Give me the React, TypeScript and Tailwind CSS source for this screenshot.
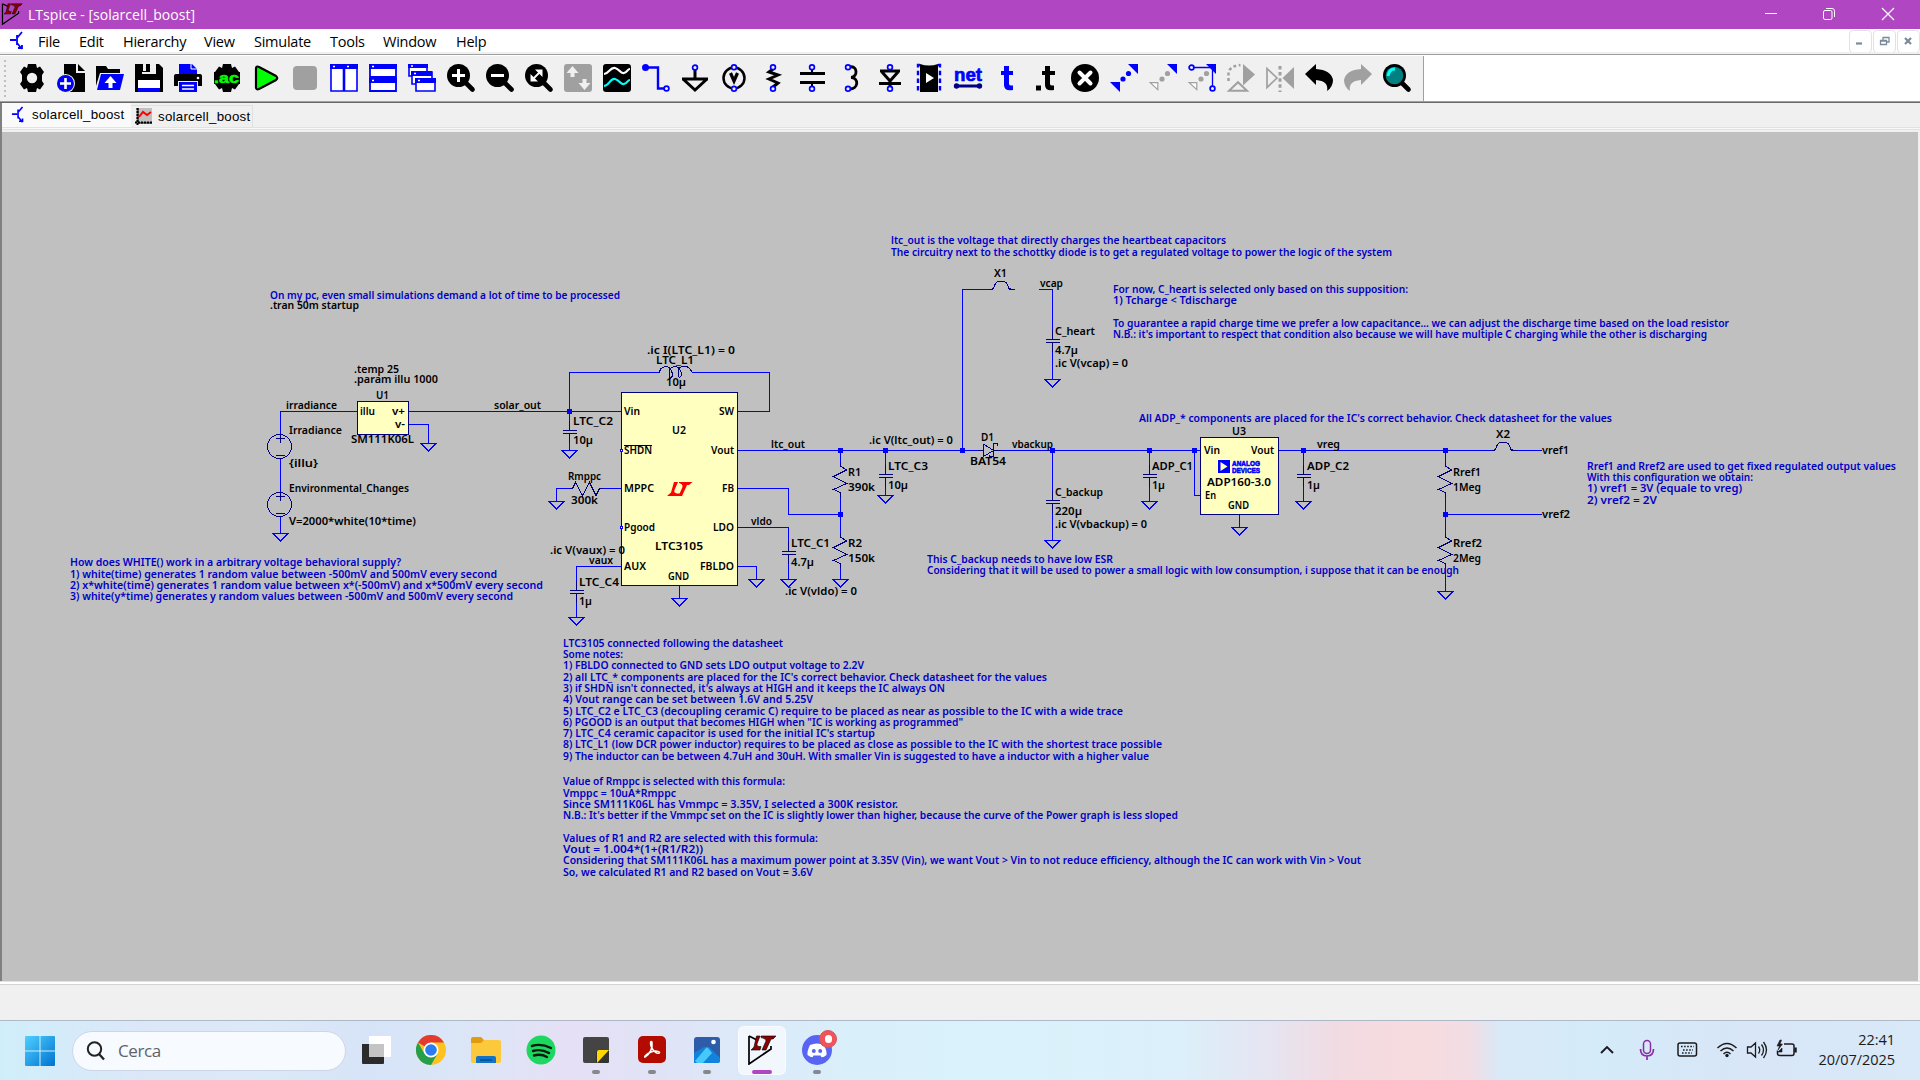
import React from "react";

type Kids = { children?: React.ReactNode };
const BLUE = "#0000ff";
const NAVY = "#000080";
const GREY = "#a0a0a0";

/* ---------- Toolbar icons, 28 x 28 ---------- */

const Mag = ({ children }: Kids) => (
  <>
    <path d="M18 18l7.5 7.5" stroke="#000" strokeWidth="4.6" strokeLinecap="round" />
    <circle cx="11.500" cy="11.500" r="11.500" fill="#000" />
    {children}
  </>
);
const Pin = ({ x, y }: { x: number; y: number }) => (
  <circle cx={x} cy={y} r="2.4" fill="#f0f0f0" stroke={BLUE} strokeWidth="1.7" />
);

const toolbarIcons: React.ReactNode[] = [
  <>
    <path d="M10 0h8l1 4 3-1.500 4 5.500-2 3v6l2 3-4 5.500-3-1.500-1 4h-8l-1-4-3 1.500-4-5.500 2-3v-6l-2-3 4-5.500 3 1.500z" fill="#000" />
    <circle cx="14" cy="14" r="5.200" fill="#f0f0f0" />
  </>,
  <>
    <path d="M7 0h12v9h9v19H7z" fill="#000" />
    <path d="M21 0l7 7h-7z" fill="#000" />
    <circle cx="8.500" cy="19.500" r="9.500" fill="#f0f0f0" />
    <circle cx="8.500" cy="19.500" r="8.500" fill={BLUE} />
    <path d="M8.500 14v11M3 19.500h11" stroke="#fff" strokeWidth="2.600" />
  </>,
  <>
    <path d="M0 2h10l2 3h12v4H4L0 22z" fill="#000" />
    <path d="M5 10h23l-4 16H1z" fill={BLUE} />
    <path d="M14.500 12l6 7h-4v5h-4v-5h-4z" fill="#fff" />
  </>,
  <>
    <path d="M0 0h24l4 4v24H0z" fill="#000" />
    <path d="M7 0h14v10H7z" fill="#f0f0f0" />
    <path d="M7 0h8v8H7z" fill="#000" />
    <path d="M8 0h3v7H8z" fill="#f0f0f0" />
    <path d="M3 16h22v8H3z" fill="#fff" />
    <path d="M3 24h22v4H3z" fill={BLUE} />
  </>,
  <>
    <path d="M5 0h13l5 5v5H5z" fill={BLUE} />
    <path d="M17 0v5h6" stroke="#fff" fill="none" />
    <path d="M0 12q0-2 2-2h24q2 0 2 2v10H0z" fill="#000" />
    <circle cx="24" cy="14" r="1.300" fill="#fff" />
    <path d="M4 17h20v11H4z" fill="#f0f0f0" />
    <path d="M5 18h18v10H5z" fill={BLUE} />
    <path d="M8 21.500h12M8 25h12" stroke="#fff" strokeWidth="1.500" />
  </>,
  <>
    <path d="M10 0h8l1 4 3-1.500 4 5.500-2 3v6l2 3-4 5.500-3-1.500-1 4h-8l-1-4-3 1.500-4-5.500 2-3v-6l-2-3 4-5.500 3 1.500z" fill="#000" />
    <path d="M1 8h26v12H1z" fill="#000" />
    <text x="1" y="18.500" fontSize="15" fontWeight="700" fill="#00ff00" stroke="#00ff00" strokeWidth=".5" textLength="25" lengthAdjust="spacingAndGlyphs" fontFamily="Liberation Sans, sans-serif">.ac</text>
  </>,
  <path d="M4 4.500q0-3 3-1.500l17 9q2.500 2 0 4l-17 9q-3 1-3-1.500z" fill="#00ff00" stroke="#000" strokeWidth="2.200" />,
  <rect x="2" y="2" width="24" height="24" rx="4" fill={GREY} />,
  <>
    <path d="M1 1h12.500v26H1zM14.500 1H27v26H14.500z" fill="#fff" stroke={BLUE} strokeWidth="1.600" />
    <path d="M0 0h28v5H0z" fill={BLUE} />
    <path d="M3 2.500h2M17 2.500h2" stroke="#fff" strokeWidth="1.500" />
  </>,
  <>
    <path d="M1 1h26v12H1zM1 15h26v12H1z" fill="#fff" stroke={BLUE} strokeWidth="1.800" />
    <path d="M0 0h28v5H0zM0 14h28v5H0z" fill={BLUE} />
    <path d="M3 2.500h2M3 16.500h2" stroke="#fff" strokeWidth="1.500" />
  </>,
  <>
    <path d="M1 1h18v11H1z" fill="#fff" stroke={BLUE} strokeWidth="1.600" />
    <path d="M0 0h20v4H0z" fill={BLUE} />
    <path d="M4 8h20v12H4z" fill="#fff" stroke={BLUE} strokeWidth="1.600" />
    <path d="M3 7h21v5H3z" fill={BLUE} />
    <path d="M8 16h19v11H8z" fill="#fff" stroke={BLUE} strokeWidth="1.600" />
    <path d="M7 14h21v5H7z" fill={BLUE} />
    <path d="M3 2h2M6 9.500h2M10 16.500h2" stroke="#fff" strokeWidth="1.500" />
  </>,
  <Mag><path d="M11.500 5v13M5 11.500h13" stroke="#fff" strokeWidth="3" /></Mag>,
  <Mag><path d="M5 11.500h13" stroke="#fff" strokeWidth="3" /></Mag>,
  <Mag><path d="M10 5.500h7.500V13zM5.500 10v7.500H13z" fill="#fff" /><path d="M7 16l9-9" stroke="#fff" strokeWidth="1.800" /></Mag>,
  <>
    <rect width="28" height="28" rx="3" fill={GREY} />
    <path d="M8.500 2l6 7h-4v4h-4V9h-4zM20.500 26l6-7h-4v-4h-4v4h-4z" fill="#f0f0f0" />
  </>,
  <>
    <rect width="28" height="28" rx="3" fill="#000" />
    <path d="M1 10c5 0 6-7 11-6s5 6 9 5 3-4 6-4" stroke="#fff" strokeWidth="2.200" fill="none" />
    <path d="M1 22c5 0 6-8 11-7s5 6 9 5 3-4 6-4" stroke="#00ffff" strokeWidth="2.200" fill="none" />
  </>,
  <>
    <path d="M4 3.500h12v21h8" stroke={BLUE} strokeWidth="2.400" fill="none" />
    <circle cx="3.500" cy="3.500" r="3.500" fill={BLUE} />
    <Pin x={24.500} y={24.500} />
  </>,
  <>
    <path d="M14 5v9M1 15h26M2 15l12 11 12-11" stroke="#000" strokeWidth="3" fill="none" />
    <Pin x={14} y={3.500} />
  </>,
  <>
    <circle cx="14" cy="14" r="10.500" fill="none" stroke="#000" strokeWidth="2.500" />
    <path d="M10.500 9l3.500 8 3.500-8" stroke="#000" strokeWidth="3.200" fill="none" />
    <Pin x={14} y={3.200} /><Pin x={14} y={24.800} />
  </>,
  <>
    <path d="M14 5l-4 3 9 3-9 4 9 4-5 4" stroke="#000" strokeWidth="3" fill="none" />
    <Pin x={14} y={3.200} /><Pin x={14} y={24.800} />
  </>,
  <>
    <path d="M2 9.500h25M2 18.500h25" stroke="#000" strokeWidth="3.200" />
    <path d="M14 5v5M14 18v5" stroke="#000" strokeWidth="2" />
    <Pin x={14} y={3.200} /><Pin x={14} y={24.800} />
  </>,
  <>
    <path d="M12 3c9-2 9 10 2 10.500c8 0 8 12-2 11.500" stroke="#000" strokeWidth="2.800" fill="none" />
    <Pin x={11} y={3.200} /><Pin x={11} y={24.800} />
  </>,
  <>
    <path d="M4 7h20M6 8l8 9 8-9M3 19.500h22M14 17v7" stroke="#000" strokeWidth="3" fill="none" />
    <Pin x={14} y={3.200} /><Pin x={14} y={24.800} />
  </>,
  <>
    <path d="M5 0q9 3 18 0v28H5z" fill="#000" />
    <path d="M11 9l8 5-8 5z" fill="#fff" />
    <path d="M5 1H3v26h2M23 1h2v26h-2" stroke={BLUE} strokeWidth="2.400" strokeDasharray="4.500 3.200" fill="none" />
  </>,
  <>
    <text x="0" y="17" fontSize="18.500" fontWeight="700" fill={BLUE} stroke={BLUE} strokeWidth=".7" textLength="28" lengthAdjust="spacingAndGlyphs" fontFamily="Liberation Sans, sans-serif">net</text>
    <path d="M2 22h24" stroke={NAVY} strokeWidth="3" />
    <circle cx="2.500" cy="22" r="2.700" fill={NAVY} /><circle cx="25.500" cy="22" r="2.700" fill={NAVY} />
  </>,
  <path d="M11 2h5v5h4v4h-4v9q0 2 4 1.500v4.500q-9 1.500-9-5V11H8V7h3z" fill={BLUE} />,
  <path d="M13 2h5v5h5v4h-5v9q0 2 4 1.500v4.500q-9 1.500-9-5V11h-3V7h3zM4 21.500h5v5H4z" fill="#000" />,
  <>
    <circle cx="14" cy="14" r="14" fill="#000" />
    <path d="M8.500 8.500l11 11M19.500 8.500l-11 11" stroke="#fff" strokeWidth="4" strokeLinecap="round" />
  </>,
  <>
    <path d="M18 0h10v10zM0 18h10v10z" fill={BLUE} />
    <circle cx="18.500" cy="9.500" r="2.600" fill={BLUE} /><circle cx="13" cy="15" r="2.600" fill={BLUE} />
  </>,
  <>
    <path d="M18 0h10v10z" fill={BLUE} />
    <path d="M1.200 18.600h7.600v7z" fill="#fff" stroke={GREY} strokeWidth="1.200" />
    <circle cx="18.500" cy="9.500" r="2.600" fill={GREY} /><circle cx="13" cy="15" r="2.600" fill={GREY} />
  </>,
  <>
    <path d="M18 0h10v10z" fill={BLUE} />
    <path d="M3 3.500h21.500v21" stroke={BLUE} strokeWidth="1.300" fill="none" />
    <path d="M1.200 18.600h7.600v7z" fill="#fff" stroke={GREY} strokeWidth="1.200" />
    <circle cx="18.500" cy="9.500" r="2.600" fill={GREY} /><circle cx="13" cy="15" r="2.600" fill={GREY} />
    <Pin x={3.500} y={3.500} /><Pin x={24.500} y={24.500} />
  </>,
  <>
    <path d="M16 0l12 10.500-12 11z" fill={GREY} />
    <path d="M1.500 17V8q2-6 12-7" stroke={GREY} strokeWidth="2.500" strokeDasharray="3 2.500" fill="none" />
    <path d="M2 26.700l9-8.500 9 8.500z" fill="#f0f0f0" stroke={GREY} strokeWidth="2" />
  </>,
  <>
    <path d="M1 4.500L11 14 1 23.500z" fill="none" stroke={GREY} strokeWidth="1.700" />
    <path d="M28 3L16.500 14 28 25z" fill={GREY} />
    <path d="M14 2v26" stroke={GREY} strokeWidth="3" strokeDasharray="3.500 2.600" />
  </>,
  <path d="M0 10L11 0v5q15 1 17 11 0 7-6 11 2-10-11-11v5z" fill="#000" />,
  <path d="M28 10L17 0v5Q2 6 0 16q0 7 6 11-2-10 11-11v5z" fill={GREY} />,
  <Mag>
    <circle cx="11.500" cy="11.500" r="8.800" fill="#008080" />
    <path d="M5 12q1-7 7-7" stroke="#00ffff" strokeWidth="3" fill="none" />
  </Mag>,
];

const LTLogo = ({ s }: { s: number }) => (
  <svg width={s} height={s} viewBox="0 0 30 30" fill="none">
    <path d="M2 1v28L24 14V11M2 1l8 4" stroke="#000" strokeWidth="1.700" />
    <path d="M9.500 1h3.500l-3 8q-.5 2 2 2.500h2l-1 3.500H4l3-3zM14 1h15l-3 3h-2l-5 11h-4l4-9q.5-2.500-5-3.500z" fill="#8b0000" stroke="#000" strokeWidth=".6" />
  </svg>
);

const Transistor = () => (
  <svg width="15" height="20" viewBox="0 0 15 20" fill="none" stroke={BLUE} strokeWidth="1.800">
    <path d="M0 9h6M7 4v10M7 7l5-6M7 12l5 6M8 17h4v-3" />
  </svg>
);

/* ---------- Schematic ---------- */

type Label = [number, number, number, string];

const blackLabels: Label[] = [
  [270, 309, 359, ".tran 50m startup"],
  [354, 373, 399, ".temp 25"],
  [354, 383, 438, ".param illu 1000"],
  [376, 399, 389, "U1"],
  [286, 409, 337, "irradiance"],
  [360, 415, 375, "illu"],
  [392, 415, 405, "v+"],
  [395, 428, 405, "v-"],
  [289, 434, 342, "Irradiance"],
  [351, 443, 414, "SM111K06L"],
  [289, 467, 318, "{illu}"],
  [289, 492, 409, "Environmental_Changes"],
  [289, 525, 416, "V=2000*white(10*time)"],
  [494, 409, 541, "solar_out"],
  [573, 425, 613, "LTC_C2"],
  [573, 444, 593, "10µ"],
  [568, 480, 601, "Rmppc"],
  [571, 504, 598, "300k"],
  [647, 354, 735, ".ic I(LTC_L1) = 0"],
  [656, 364, 694, "LTC_L1"],
  [666, 386, 686, "10µ"],
  [624, 415, 640, "Vin"],
  [719, 415, 734, "SW"],
  [672, 434, 686, "U2"],
  [624, 454, 652, "SHDN"],
  [711, 454, 734, "Vout"],
  [624, 492, 654, "MPPC"],
  [722, 492, 734, "FB"],
  [624, 531, 655, "Pgood"],
  [713, 531, 734, "LDO"],
  [655, 550, 703, "LTC3105"],
  [624, 570, 646, "AUX"],
  [700, 570, 734, "FBLDO"],
  [668, 580, 689, "GND"],
  [550, 554, 625, ".ic V(vaux) = 0"],
  [589, 564, 613, "vaux"],
  [579, 586, 619, "LTC_C4"],
  [579, 605, 592, "1µ"],
  [771, 448, 805, "ltc_out"],
  [848, 476, 861, "R1"],
  [848, 491, 875, "390k"],
  [848, 547, 862, "R2"],
  [848, 562, 875, "150k"],
  [751, 525, 772, "vldo"],
  [791, 547, 830, "LTC_C1"],
  [791, 566, 814, "4.7µ"],
  [785, 595, 857, ".ic V(vldo) = 0"],
  [994, 277, 1007, "X1"],
  [1040, 287, 1063, "vcap"],
  [1055, 335, 1095, "C_heart"],
  [1055, 354, 1078, "4.7µ"],
  [1055, 367, 1128, ".ic V(vcap) = 0"],
  [869, 444, 953, ".ic V(ltc_out) = 0"],
  [981, 441, 994, "D1"],
  [970, 465, 1006, "BAT54"],
  [1012, 448, 1053, "vbackup"],
  [888, 470, 928, "LTC_C3"],
  [888, 489, 908, "10µ"],
  [1055, 496, 1103, "C_backup"],
  [1055, 515, 1082, "220µ"],
  [1055, 528, 1147, ".ic V(vbackup) = 0"],
  [1232, 435, 1246, "U3"],
  [1152, 470, 1193, "ADP_C1"],
  [1152, 489, 1165, "1µ"],
  [1204, 454, 1220, "Vin"],
  [1251, 454, 1274, "Vout"],
  [1207, 486, 1271, "ADP160-3.0"],
  [1205, 499, 1216, "En"],
  [1228, 509, 1249, "GND"],
  [1317, 448, 1340, "vreg"],
  [1307, 470, 1349, "ADP_C2"],
  [1307, 489, 1320, "1µ"],
  [1496, 438, 1510, "X2"],
  [1542, 454, 1569, "vref1"],
  [1542, 518, 1570, "vref2"],
  [1453, 476, 1481, "Rref1"],
  [1453, 491, 1481, "1Meg"],
  [1453, 547, 1482, "Rref2"],
  [1453, 562, 1481, "2Meg"],
];

const blueLabels: Label[] = [
  [270, 299, 620, "On my pc, even small simulations demand a lot of time to be processed"],
  [891, 244, 1226, "ltc_out is the voltage that directly charges the heartbeat capacitors"],
  [891, 256, 1392, "The circuitry next to the schottky diode is to get a regulated voltage to power the logic of the system"],
  [1113, 293, 1408, "For now, C_heart is selected only based on this supposition:"],
  [1113, 304, 1237, "1) Tcharge < Tdischarge"],
  [1113, 327, 1729, "To guarantee a rapid charge time we prefer a low capacitance... we can adjust the discharge time based on the load resistor"],
  [1113, 338, 1707, "N.B.: it's important to respect that condition also because we will have multiple C charging while the other is discharging"],
  [1139, 422, 1612, "All ADP_* components are placed for the IC's correct behavior. Check datasheet for the values"],
  [1587, 470, 1896, "Rref1 and Rref2 are used to get fixed regulated output values"],
  [1587, 481, 1753, "With this configuration we obtain:"],
  [1587, 492, 1742, "1) vref1 = 3V (equale to vreg)"],
  [1587, 504, 1657, "2) vref2 = 2V"],
  [927, 563, 1113, "This C_backup needs to have low ESR"],
  [927, 574, 1459, "Considering that it will be used to power a small logic with low consumption, i suppose that it can be enough"],
  [70, 566, 401, "How does WHITE() work in a arbitrary voltage behavioral supply?"],
  [70, 578, 497, "1) white(time) generates 1 random value between -500mV and 500mV every second"],
  [70, 589, 543, "2) x*white(time) generates 1 random value between x*(-500mV) and x*500mV every second"],
  [70, 600, 513, "3) white(y*time) generates y random values between -500mV and 500mV every second"],
  [563, 647, 783, "LTC3105 connected following the datasheet"],
  [563, 658, 623, "Some notes:"],
  [563, 669, 864, "1) FBLDO connected to GND sets LDO output voltage to 2.2V"],
  [563, 681, 1047, "2) all LTC_* components are placed for the IC's correct behavior. Check datasheet for the values"],
  [563, 692, 945, "3) if SHDN isn't connected, it's always at HIGH and it keeps the IC always ON"],
  [563, 703, 813, "4) Vout range can be set between 1.6V and 5.25V"],
  [563, 715, 1123, "5) LTC_C2 e LTC_C3 (decoupling ceramic C) require to be placed as near as possible to the IC with a wide trace"],
  [563, 726, 963, "6) PGOOD is an output that becomes HIGH when \"IC is working as programmed\""],
  [563, 737, 875, "7) LTC_C4 ceramic capacitor is used for the initial IC's startup"],
  [563, 748, 1162, "8) LTC_L1 (low DCR power inductor) requires to be placed as close as possible to the IC with the shortest trace possible"],
  [563, 760, 1149, "9) The inductor can be between 4.7uH and 30uH. With smaller Vin is suggested to have a inductor with a higher value"],
  [563, 785, 785, "Value of Rmppc is selected with this formula:"],
  [563, 797, 676, "Vmppc = 10uA*Rmppc"],
  [563, 808, 898, "Since SM111K06L has Vmmpc = 3.35V, I selected a 300K resistor."],
  [563, 819, 1178, "N.B.: It's better if the Vmmpc set on the IC is slightly lower than higher, because the curve of the Power graph is less sloped"],
  [563, 842, 818, "Values of R1 and R2 are selected with this formula:"],
  [563, 853, 703, "Vout = 1.004*(1+(R1/R2))"],
  [563, 864, 1361, "Considering that SM111K06L has a maximum power point at 3.35V (Vin), we want Vout > Vin to not reduce efficiency, although the IC can work with Vin > Vout"],
  [563, 876, 813, "So, we calculated R1 and R2 based on Vout = 3.6V"],
];

const Labels = ({ items, fill }: { items: Label[]; fill: string }) => (
  <g fill={fill} fontSize="10.300" fontWeight="600" fontFamily="'Noto Sans', 'DejaVu Sans', sans-serif">
    {items.map(([x, y, end, t], i) => (
      <text key={i} x={x} y={y} textLength={end - x} lengthAdjust="spacingAndGlyphs">{t}</text>
    ))}
  </g>
);

const Ground = ({ x, y }: { x: number; y: number }) => (
  <path d={`M${x - 7.5} ${y + 0.5}h15l-7.500 7.500z`} transform="translate(.5 0)" stroke={BLUE} />
);

const Cap = ({ x, top, plate, gnd }: { x: number; top: number; plate: number; gnd: number }) => (
  <>
    <path d={`M${x + 0.5} ${top}V${plate - 9}M${x + 0.5} ${plate + 13}V${gnd}`} stroke={BLUE} />
    <path d={`M${x + 0.5} ${plate - 9}v9M${x - 6} ${plate + 0.5}h14M${x - 6} ${plate + 3.5}h14M${x + 0.5} ${plate + 4}v9`} stroke={NAVY} />
    <Ground x={x} y={gnd} />
  </>
);

const Resistor = ({ x, y }: { x: number; y: number }) => (
  <path d={`M${x + 0.5} ${y}v3l6 4-13 6.500 13 7-13 6 7 3v4`} stroke={NAVY} />
);

const Source = ({ y }: { y: number }) => (
  <>
    <circle cx="279.500" cy={y} r="12" stroke={NAVY} />
    <path d={`M280.500 ${y - 12}v8M276 ${y - 8}h9M276 ${y + 9}h9`} stroke={NAVY} />
  </>
);

const Jumper = ({ x, y }: { x: number; y: number }) => (
  <path d={`M${x} ${y + 0.5}h2q2 -1 3 -5q2 -3.500 6 -3.500q5 0 6.500 3.500l1.500 4l1 1l1 -1m-1 1h5`} stroke={NAVY} />
);

const junctions: [number, number][] = [
  [569, 411], [840, 450], [840, 514], [885, 450], [962, 450], [1052, 450], [1149, 450], [1194, 450], [1303, 450], [1445, 450], [1445, 514],
];

const Schematic = () => (
  <svg width="1915" height="849" viewBox="3 132 1915 849" className="block" fill="none">
    <g shapeRendering="crispEdges">
      <g fill="#ffffc0" stroke={NAVY}>
        <rect x="357.500" y="401.500" width="51" height="33" />
        <rect x="621.500" y="392.500" width="116" height="193" />
        <rect x="1200.500" y="437.500" width="78" height="77" />
      </g>
      <path
        stroke={BLUE}
        d="M357 411.500H280.500V435M280.500 459V493M280.500 517V533M409 411.500H621M409 424.500H428.500V443M569.500 411V372.500H659M692 372.500H769.500V411.500H738
        M573 488.500H556.500V501M600 488.500H621M621 566.500H576.500V582M679.500 586V598M738 566.500H756.500V579M738 527.500H788.500V542M738 488.500H788.500V514.500H840
        M738 450.500H978M1001 450.500H1200M840.500 450V463M840.500 496V534M840.500 567V579M962.500 450V289.500H990M1039 289.500H1052.500V330
        M1194.500 450V495.500H1200M1239.500 515V527M1279 450.500H1493M1515 450.500H1542M1445.500 450V463M1445.500 496V534M1445.500 567V591M1445 514.500H1542"
      />
      <Source y={446.5} />
      <Source y={504.5} />
      <Ground x={280} y={533} />
      <Ground x={428} y={443} />
      <Ground x={556} y={501} />
      <Ground x={679} y={598} />
      <Ground x={756} y={579} />
      <Ground x={840} y={579} />
      <Ground x={1239} y={527} />
      <Ground x={1445} y={591} />
      <Cap x={569} top={411} plate={430} gnd={450} />
      <Cap x={576} top={566} plate={590} gnd={617} />
      <Cap x={788} top={527} plate={551} gnd={579} />
      <Cap x={885} top={450} plate={474} gnd={495} />
      <Cap x={1052} top={289} plate={339} gnd={379} />
      <Cap x={1052} top={450} plate={500} gnd={540} />
      <Cap x={1149} top={450} plate={474} gnd={501} />
      <Cap x={1303} top={450} plate={474} gnd={501} />
      <Resistor x={840} y={463} />
      <Resistor x={840} y={534} />
      <Resistor x={1445} y={463} />
      <Resistor x={1445} y={534} />
      <path d="M570 488.500h2.500l3-6 7 13 7-13 6.500 13 3.500-7h3" stroke={NAVY} />
      <path d="M659 372.500l2-4q3-2 6-2 4 1 5 6v4l-1.500 1.500-1.500-2v-4q1-5 6-5.500 5 1 6 5.500v4l-1.500 1.500-1.500-2v-4q1-5 6-5.500 5 0 8 6" stroke={NAVY} />
      <Jumper x={990} y={289} />
      <Jumper x={1492} y={450} />
      <path d="M978 450.500h5.500M983.500 444v12.500l10-6-10-6.500M997 446v-2.500h-3.500v13h-4v-2M993 450.500h8" stroke={NAVY} />
      <g fill={BLUE}>
        {junctions.map(([x, y], i) => <rect key={i} x={x - 2} y={y - 2} width="5" height="5" />)}
      </g>
      <rect x="620.500" y="449.500" width="2" height="2" fill="#fff" stroke={BLUE} />
      <rect x="620.500" y="526.500" width="2" height="2" fill="#fff" stroke={BLUE} />
      <path d="M624 445.500h28" stroke="#000" />
    </g>
    <path d="M674 482h4l-3.500 8q-1 3 2.500 3.500h4l-1 2.500h-13l4-3.500zM679 482h13.500l-3.500 3h-2l-5 11h-3.500l4-9q.5-3-3.500-4z" fill="#f00" />
    <path d="M1218 460h12v13h-12z" fill={BLUE} />
    <path d="M1220.500 462l7 4.500-7 4.500z" fill="#ffffc0" />
    <g fill={BLUE} stroke={BLUE} strokeWidth=".6" fontSize="7.800" fontWeight="700" fontFamily="Liberation Sans, sans-serif">
      <text x="1232" y="466" textLength="28" lengthAdjust="spacingAndGlyphs">ANALOG</text>
      <text x="1232" y="473" textLength="28" lengthAdjust="spacingAndGlyphs">DEVICES</text>
    </g>
    <Labels items={blackLabels} fill="#000" />
    <Labels items={blueLabels} fill="#0000c8" />
  </svg>
);

/* ---------- Taskbar ---------- */

const Svg = ({ children, s = 30 }: Kids & { s?: number }) => (
  <svg width={s} height={s} viewBox="0 0 30 30" fill="none">{children}</svg>
);

const taskApps: { icon: React.ReactNode; dot?: "idle" | "active" }[] = [
  { icon: <Svg><path d="M1 9h22v19q0 1-1 1H2q-1 0-1-1z" fill="#2b2b2b" /><path d="M8 2q0-1 1-1h20q1 0 1 1v19q0 1-1 1H8z" fill="#fff" /><path d="M8 9h15v13H8z" fill="#c4c4c4" /></Svg> },
  { icon: (
    <Svg>
      <circle cx="15" cy="15" r="15" fill="#fcc31e" />
      <path d="M15 15L2 7.500A15 15 0 0 1 28 7.500H15z" fill="#e33b2e" />
      <path d="M2 7.500A15 15 0 0 0 15 30L21.500 18.700 8.500 18.700z" fill="#269f4c" />
      <circle cx="15" cy="15" r="7.500" fill="#fff" /><circle cx="15" cy="15" r="5.800" fill="#2a7cf0" />
    </Svg>) },
  { icon: (
    <Svg>
      <path d="M0 4q0-2 2-2h8l3 3v5H0z" fill="#e09b0f" /><path d="M0 8h10l3-3h15q2 0 2 2v19q0 2-2 2H2q-2 0-2-2z" fill="#fdc93c" />
      <path d="M5 28v-5q0-2 2-2h16q2 0 2 2v5z" fill="#1173c9" /><path d="M9 25h12" stroke="#0a4b87" strokeWidth="1.500" />
    </Svg>) },
  { icon: (
    <Svg>
      <circle cx="15" cy="15" r="14.500" fill="#1ed760" />
      <path d="M6 11q9-3 19 2M7 16q8-2.500 16 2M8 20.500q7-2 13 1.500" stroke="#0a1a10" strokeWidth="2.400" strokeLinecap="round" />
    </Svg>) },
  { dot: "idle", icon: <Svg><path d="M2 4q0-2 2-2h22q2 0 2 2v12L17 28H4q-2 0-2-2z" fill="#444" /><path d="M28 15v12q0 1-1 1H15V17q0-2 2-2z" fill="#333" /><path d="M28 15L16 28V17q0-2 2-2z" fill="#ffd800" /></Svg> },
  { dot: "idle", icon: (
    <Svg>
      <rect x="1" y="1" width="28" height="27" rx="5" fill="#b30b00" />
      <path d="M8 22c5-3 8-9 7-15-2-2-2 3 0 6 2 4 5 6 7 5s-2-3-8-1-7 6-6 5z" stroke="#fff" strokeWidth="1.500" />
    </Svg>) },
  { dot: "idle", icon: (
    <Svg>
      <rect x="2" y="2" width="26" height="26" rx="3" fill="#2d5da8" />
      <path d="M2 28V18L12 12h5l11 11v3q0 2-2 2z" fill="#1283dc" /><path d="M3 26L14 13q1-1 2 0l4 5-9 10H5z" fill="#46c8fa" /><circle cx="21.500" cy="7" r="2.300" fill="#fff" />
    </Svg>) },
  { dot: "active", icon: <LTLogo s={30} /> },
  { dot: "idle", icon: (
    <div className="relative">
      <Svg>
        <circle cx="15" cy="15" r="15" fill="#5865f2" />
        <path d="M8 10q7-3 14 0 3 6 2.500 10-3 2.500-5 2.200l-1-1.700h-7l-1 1.700q-2 0-5-2.200Q5 16 8 10z" fill="#fff" />
        <circle cx="11.800" cy="16" r="2" fill="#5865f2" /><circle cx="18.200" cy="16" r="2" fill="#5865f2" />
      </Svg>
      <div className="absolute -right-[5px] -top-[5px] flex h-[18px] w-[18px] items-center justify-center rounded-full border border-[#c85a62] bg-[#f2535b]">
        <div className="h-[8px] w-[7px] rounded-full bg-white" />
      </div>
    </div>) },
];

const menus: [string, string][] = [
  ["File", "w-[41px]"], ["Edit", "w-[44px]"], ["Hierarchy", "w-[81px]"], ["View", "w-[50px]"],
  ["Simulate", "w-[76px]"], ["Tools", "w-[53px]"], ["Window", "w-[73px]"], ["Help", "w-[40px]"],
];

export default function App() {
  return (
    <div className="flex h-[1080px] w-[1920px] flex-col overflow-hidden bg-[#f0f0f0] font-['Open_Sans','Noto_Sans',sans-serif] text-black">
      {/* Title bar */}
      <div className="flex h-[29px] shrink-0 items-center bg-[#b146c2] text-white">
        <div className="ml-px mt-[-1px]"><LTLogo s={22} /></div>
        <span className="ml-[5px] whitespace-nowrap text-[14px] tracking-[0.03px]">LTspice - [solarcell_boost]</span>
        <svg className="ml-auto" width="175" height="29" viewBox="1745 0 175 29" fill="none" stroke="#fff">
          <path d="M1765 13.500h12" />
          <rect x="1823.500" y="10.500" width="8.500" height="9" rx="1.500" /><path d="M1826 8.500h6q2.500 0 2.500 2.500v6" />
          <path d="M1882 8l12 12M1894 8l-12 12" strokeWidth="1.200" />
        </svg>
      </div>

      {/* Menu bar */}
      <div className="flex h-[23px] shrink-0 items-center bg-white text-[14.5px] leading-[23px]">
        <div className="flex w-[38px] justify-center pr-1"><Transistor /></div>
        {menus.map(([name, w]) => (
          <span key={name} className={`${w} whitespace-nowrap pt-px tracking-[-0.25px]`}>{name}</span>
        ))}
        <div className="ml-auto flex gap-px pt-px">
          {["M4 11.500h6", "M7 8V5.500h6V10h-2M4.500 8.500h6v4h-6zM4 9h7", "M5 6l6 6M11 6l-6 6"].map((d, i) => (
            <div key={i} className="h-[23px] w-[23px] rounded-sm border border-[#e2e2e2] bg-white">
              <svg width="21" height="21" viewBox="-2 -1 21 21" fill="none" stroke="#7a8a9a" strokeWidth={i === 1 ? 1.3 : 2.2}><path d={d} /></svg>
            </div>
          ))}
        </div>
      </div>

      {/* Toolbar */}
      <div className="flex h-[51px] shrink-0 border-b border-b-[#696969] bg-[#f0f0f0] pt-[2px]">
        <div className="flex w-full border-b border-t border-[#a0a0a0] bg-white pt-px">
          <div className="flex items-center border-r border-[#a0a0a0] bg-[#f0f0f0]">
            <div className="ml-1 flex w-[8.5px] flex-col gap-[3px]">
              {Array.from({ length: 8 }, (_, i) => <div key={i} className="h-[2px] w-[2px] bg-[#c0c0c0]" />)}
            </div>
            {toolbarIcons.map((icon, i) => (
              <div key={i} className="flex w-[39px] justify-center pb-px">
                <svg width="28" height="28" viewBox="0 0 28 28" fill="none" className="overflow-visible">{icon}</svg>
              </div>
            ))}
            <div className="w-[6px]" />
          </div>
        </div>
      </div>

      {/* Document tabs */}
      <div className="flex h-[29px] shrink-0 flex-col border-l-2 border-l-[#808080] bg-[#f0f0f0]">
        <div className="flex h-[24px] font-['Liberation_Sans',sans-serif] text-[13.3px]">
          <div className="flex w-[129px] items-center gap-[6px] bg-[#fafafa] pl-[9px]">
            <div className="scale-90"><Transistor /></div><span className="pb-px tracking-[0.25px]">solarcell_boost</span>
          </div>
          <div className="mt-[2px] flex w-[122px] items-center gap-[6px] border-r border-t border-[#e0e0e0] pl-[4px]">
            <svg width="17" height="17" viewBox="0 0 17 17" fill="none">
              <path d="M1 0h16v15H1z" fill="#c0c0c0" /><path d="M2.500 0v17M0 14.500h17" stroke="#000" strokeWidth="2" strokeDasharray="2 1" /><path d="M3 0v15h14" stroke="#000" />
              <path d="M4 9l4-5 4 3 4-3" stroke="#f00" strokeWidth="2" />
            </svg>
            <span className="tracking-[0.25px]">solarcell_boost</span>
          </div>
        </div>
        <div className="h-[3px] border-y border-[#e2e2e2] bg-[#f8f8f8]" />
      </div>

      {/* Drawing area */}
      <div className="h-[849px] shrink-0 border-l-2 border-r-2 border-l-[#808080] border-r-[#f0f0f0] bg-[#c0c0c0] pl-px">
        <Schematic />
      </div>

      {/* Status bar */}
      <div className="h-[39px] shrink-0 bg-[#f0f0f0]">
        <div className="h-[4px] border-b border-t border-b-[#d4d4d4] border-t-[#e3e3e3] bg-white" />
      </div>

      {/* Taskbar */}
      <div className="flex h-[60px] shrink-0 items-center border-t border-[#adb9c9] bg-[linear-gradient(90deg,#d0eefa_0px,#dce7f8_150px,#dce9f8_260px,#d7e4f7_370px,#dbe6f7_460px,#e6e0f5_570px,#e0e3f6_660px,#dbeaf9_760px,#d9f0fa_860px,#d9f2fb_1000px,#dceffa_1180px,#e4e6f2_1260px,#f2dbe2_1340px,#f7dcdf_1420px,#f1dde4_1470px,#d9e9f7_1500px,#d4ebf9_1600px,#d8e6f7_1740px,#d9e9f8_1920px)] text-[#1b1b1f]">
        <svg className="ml-[25px] shrink-0" width="30" height="30" viewBox="0 0 30 30">
          <defs><linearGradient id="win" x1="0" y1="0" x2="1" y2="1"><stop offset="0" stopColor="#4fd0ff" /><stop offset="1" stopColor="#0072d0" /></linearGradient></defs>
          <path d="M1 0h13.500v14.500H0V1q0-1 1-1zM15.500 0H29q1 0 1 1v13.500H15.500zM0 15.500h14.500V30H1q-1 0-1-1zM15.500 15.500H30V29q0 1-1 1H15.500z" fill="url(#win)" />
        </svg>
        <div className="ml-[17px] flex h-[40px] w-[274px] shrink-0 items-center rounded-full border border-[#ccd6e6] bg-[#f7fafe] pl-[13px]">
          <svg width="20" height="20" viewBox="0 0 20 20" fill="none" stroke="#222" strokeWidth="2"><circle cx="8.500" cy="8" r="6.700" /><path d="M13 13l5 5.500" strokeWidth="2.300" /></svg>
          <span className="ml-[12px] text-[17px] tracking-[-0.4px] text-[#5f6368]">Cerca</span>
        </div>
        <div className="ml-[2px] flex h-full items-center">
          {taskApps.map(({ icon, dot }, i) => (
            <div key={i} className="flex h-full w-[55.2px] flex-col items-center justify-center">
              <div className={dot === "active" ? "flex h-[49px] w-[48px] flex-col items-center rounded-md border border-white/60 bg-[#f2f6fd] pt-[8px]" : "flex h-[49px] w-[48px] flex-col items-center pt-[9px]"}>
                {icon}
                {dot === "active" && <div className="mt-[5px] h-[4px] w-[20px] shrink-0 rounded-full bg-[#b146c2]" />}
                {dot === "idle" && <div className="mt-[5px] h-[4px] w-[8px] shrink-0 rounded-full bg-[#85888f]" />}
              </div>
            </div>
          ))}
        </div>
        <div className="ml-auto flex items-center pr-[25px]">
          <svg width="200" height="30" viewBox="1600 1036 200 30" fill="none" stroke="#1b1b1f" strokeWidth="1.500">
            <path d="M1602 1053l6-6 6 6" strokeWidth="1.900" />
            <g stroke="#8a2da5"><rect x="1644.500" y="1040.500" width="7" height="13" rx="3.500" /><path d="M1641.500 1049q0 7 6.500 7t6.500-7M1648 1056v4" strokeWidth="1.700" /></g>
            <rect x="1679" y="1043" width="18.500" height="13" rx="2" />
            <path d="M1682 1046.500h13M1684 1050h10M1683 1053h10" strokeDasharray="1.600 1.500" />
            <path d="M1718.500 1048q9.500-9 19 0M1721.500 1051q6.500-6 13 0M1724.500 1054q3.500-3.500 7 0" />
            <circle cx="1728" cy="1055.500" r="1.700" fill="#1b1b1f" stroke="none" />
            <path d="M1748.500 1047h3.500l4.500-4v14l-4.500-4h-3.500zM1759.500 1046.500q2.500 3.500 0 7M1762.500 1044.500q4 5.500 0 11M1764.500 1042q6 8 0 16" strokeWidth="1.300" />
            <path d="M1785 1044h8q2 0 2 2v7.500q0 2-2 2h-12q-2.500 0-2.500-2v-3" /><path d="M1796.500 1047.500v5" strokeWidth="2.500" />
            <path d="M1781 1040l-3 6h2.500l-1.500 4 4.500-6h-2.500l1.500-4zM1783 1048v4h-4z" fill="#1b1b1f" strokeWidth=".6" />
          </svg>
          <div className="ml-[10px] w-[86px] pb-[2px] text-right text-[14.5px] leading-[20px] tracking-[-0.05px]">
            <div>22:41</div>
            <div>20/07/2025</div>
          </div>
        </div>
      </div>
    </div>
  );
}
